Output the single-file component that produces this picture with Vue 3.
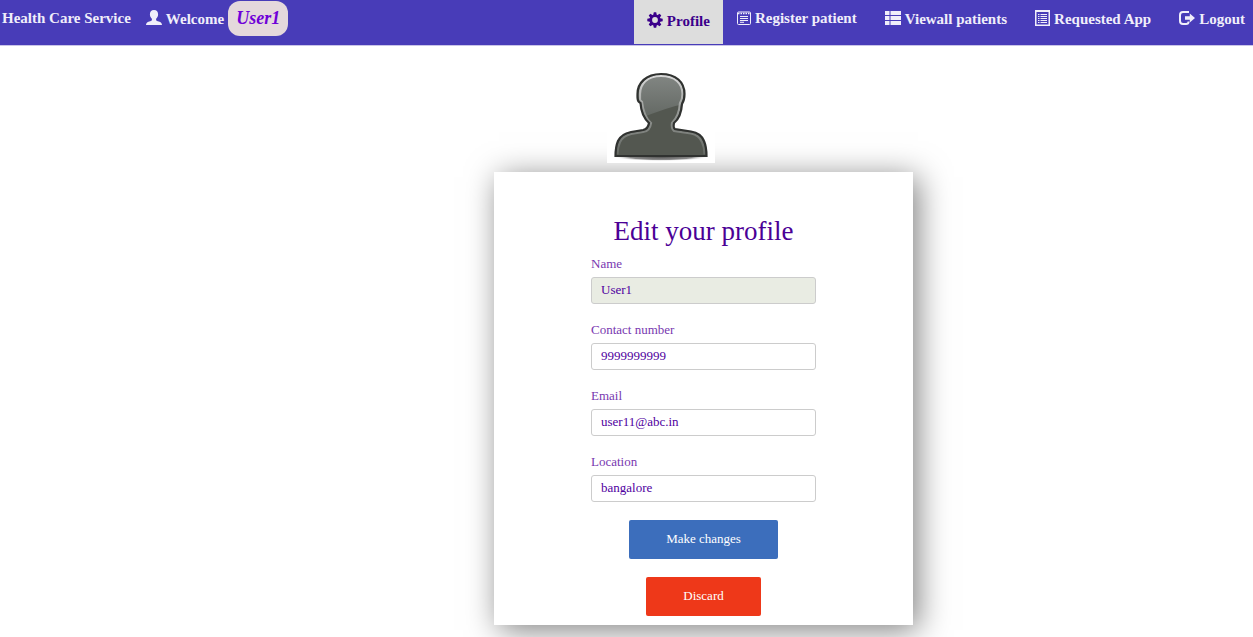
<script setup>
import { ref } from 'vue'

const name = ref('User1')
const contact = ref('9999999999')
const email = ref('user11@abc.in')
const location = ref('bangalore')
</script>

<template>
  <div class="page">
    <nav class="navbar">
      <div class="side">
        <a class="brand" href="#">Health Care Service</a>
        <a class="link" href="#">
          <svg class="icon person" viewBox="0 0 16 16" fill="currentColor" aria-hidden="true">
            <path d="M8 0C5.200 0 3.800 1.900 3.900 4.400C4 6.500 4.900 7.800 5.900 8.800V10.200C5.400 11.200 3.500 11.300 1.900 12C.7 12.600.1 13.500 0 15H16C15.900 13.500 15.300 12.600 14.100 12C12.500 11.300 10.600 11.200 10.100 10.200V8.800C11.100 7.800 12 6.500 12.100 4.400C12.200 1.900 10.800 0 8 0Z" />
          </svg>
          <span>Welcome</span>
          <em class="pill">User1</em>
        </a>
      </div>
      <div class="side menu">
        <a class="link active" href="#">
          <svg class="icon" viewBox="0 0 16 16" aria-hidden="true">
            <g fill="currentColor">
              <path d="M6.800 .3H9.200L10 4H6ZM6 12H10L9.200 15.700H6.800Z" />
              <path transform="rotate(45 8 8)" d="M6.800 .3H9.200L10 4H6ZM6 12H10L9.200 15.700H6.800Z" />
              <path transform="rotate(90 8 8)" d="M6.800 .3H9.200L10 4H6ZM6 12H10L9.200 15.700H6.800Z" />
              <path transform="rotate(135 8 8)" d="M6.800 .3H9.200L10 4H6ZM6 12H10L9.200 15.700H6.800Z" />
            </g>
            <circle cx="8" cy="8" r="4.200" fill="#ddd" stroke="currentColor" stroke-width="2.600" />
          </svg>
          <span>Profile</span>
        </a>
        <a class="link top" href="#">
          <svg class="icon small" viewBox="0 0 14 14" fill="none" stroke="currentColor" aria-hidden="true">
            <rect x=".5" y="1" width="13" height="12.500" rx="1" />
            <path d="M1 2.500H13" stroke-dasharray="1.500 1" stroke-width="1.600" />
            <path d="M3 5.500H11M3 7.500H11M3 9.500H11M3 11.300H7" />
          </svg>
          <span>Register patient</span>
        </a>
        <a class="link" href="#">
          <svg class="icon rows" viewBox="0 0 16 16" fill="currentColor" aria-hidden="true">
            <path d="M0 1H4.500V5H0ZM5.500 1H16V5H5.500ZM0 6H4.500V10H0ZM5.500 6H16V10H5.500ZM0 11H4.500V15H0ZM5.500 11H16V15H5.500Z" />
          </svg>
          <span>Viewall patients</span>
        </a>
        <a class="link" href="#">
          <svg class="icon list" viewBox="0 0 15 16" aria-hidden="true">
            <path fill="currentColor" fill-rule="evenodd" d="M0 0H15V16H0ZM1.500 2V14.500H13.500V2Z" />
            <path fill="none" stroke="currentColor" d="M3 4.500H4.500M5.500 4.500H12M3 6.500H4.500M5.500 6.500H12M3 8.500H4.500M5.500 8.500H12M3 10.500H4.500M5.500 10.500H12M3 12.500H4.500M5.500 12.500H12" />
          </svg>
          <span>Requested App</span>
        </a>
        <a class="link" href="#">
          <svg class="icon rows" viewBox="0 0 16 16" aria-hidden="true">
            <path fill="none" stroke="currentColor" stroke-width="2" d="M10 2H4Q1 2 1 5V11Q1 14 4 14H7Q9.500 14 9.500 12V11.500" />
            <path fill="currentColor" d="M6 6.200H10.800V3.500L16 8L10.800 12.500V9.800H6Z" />
          </svg>
          <span>Logout</span>
        </a>
      </div>
    </nav>

    <main class="content">
      <svg class="avatar" viewBox="0 0 108 96" role="img" aria-label="Profile picture">
        <defs>
          <radialGradient id="ground">
            <stop offset="0" stop-color="#555" />
            <stop offset=".65" stop-color="#888" />
            <stop offset="1" stop-color="#fff" stop-opacity="0" />
          </radialGradient>
          <linearGradient id="sheen" x1="0" y1="0" x2="0" y2="1">
            <stop offset="0" stop-color="#858986" />
            <stop offset="1" stop-color="#626762" />
          </linearGradient>
          <linearGradient id="rim" x1="0" y1="0" x2="0" y2="1">
            <stop offset="0" stop-color="#d8d8d8" />
            <stop offset=".45" stop-color="#969996" />
            <stop offset="1" stop-color="#666a65" />
          </linearGradient>
          <clipPath id="bust">
            <path d="M54 7C39 7 30.500 16 30.500 27C30.500 31 30 33 32 35L33.500 36C34 44 36.500 51 42 56Q41 62 36 63L24 65Q14 67 11 74Q8.500 80 8.500 89H99.500Q99.500 80 97 74Q94 66 84 64.500L68 62Q66 61 67 56C72 52 74.500 45 75 37C77 34 77.500 31 77.500 27C77.500 15 69 7 54 7Z" />
          </clipPath>
        </defs>
        <rect width="108" height="96" fill="#fff" />
        <ellipse cx="54" cy="90" rx="48" ry="4" fill="url(#ground)" />
        <g clip-path="url(#bust)">
          <rect width="108" height="96" fill="#535750" />
          <path d="M25 4H82V36Q60 40 32 52Z" fill="url(#sheen)" />
        </g>
        <path d="M54 9C40 9 33 17 33 27V33L35 35C36 44 38.500 51 44 56Q43 64 36 65L24 67Q16 69 13 75Q10.500 80 10.500 87.500M97.500 87.500Q97.500 80 95 75Q92 68 84 66.500L67 64Q64 61 65 56C70 51 72.500 45 73 36C75 33 75.500 31 75.500 27C75.500 16 68 9 54 9" fill="none" stroke="url(#rim)" stroke-width="2.200" />
        <path d="M54 7C39 7 30.500 16 30.500 27C30.500 31 30 33 32 35L33.500 36C34 44 36.500 51 42 56Q41 62 36 63L24 65Q14 67 11 74Q8.500 80 8.500 89H99.500Q99.500 80 97 74Q94 66 84 64.500L68 62Q66 61 67 56C72 52 74.500 45 75 37C77 34 77.500 31 77.500 27C77.500 15 69 7 54 7Z" fill="none" stroke="#303230" stroke-width="2.200" />
      </svg>

      <form class="card" @submit.prevent>
        <h1>Edit your profile</h1>
        <div class="field">
          <label for="name">Name</label>
          <input id="name" v-model="name" class="locked" type="text" readonly />
        </div>
        <div class="field">
          <label for="contact">Contact number</label>
          <input id="contact" v-model="contact" type="text" />
        </div>
        <div class="field">
          <label for="email">Email</label>
          <input id="email" v-model="email" type="text" />
        </div>
        <div class="field">
          <label for="location">Location</label>
          <input id="location" v-model="location" type="text" />
        </div>
        <div class="actions">
          <button class="save" type="submit">Make changes</button>
          <button class="discard" type="button">Discard</button>
        </div>
      </form>
    </main>
  </div>
</template>

<style>
body {
  margin: 0;
  background: #fff;
  overflow: hidden;
}
</style>

<style scoped>
.page {
  font-family: "Liberation Serif", "Times New Roman", serif;
  font-size: 13px;
}

.navbar {
  display: flex;
  justify-content: space-between;
  box-sizing: border-box;
  height: 46px;
  padding: 0 8px 0 2px;
  background: #483cb8;
  border-bottom: 1px solid #c9c4e8;
  font-size: 15px;
  font-weight: bold;
  line-height: 18px;
  white-space: nowrap;
}

.side {
  display: flex;
  align-items: flex-start;
  gap: 28px;
}

.side:first-child {
  gap: 15px;
}

.brand {
  padding-top: 9px;
  color: #f0eefa;
  text-decoration: none;
}

.link {
  display: flex;
  align-items: center;
  gap: 4px;
  height: 38px;
  color: #f0eefa;
  text-decoration: none;
}

.top {
  height: 36px;
}

.active {
  box-sizing: border-box;
  height: 44px;
  margin-right: -14px;
  padding: 0 13px 2px;
  background: #ddd;
  color: #3b008b;
}

.icon {
  width: 16px;
  height: 16px;
  flex: none;
}

.active .icon,
.person,
.rows,
.list {
  margin-bottom: 2px;
}

.small {
  width: 14px;
  height: 14px;
}

.list {
  width: 15px;
}

.pill {
  align-self: flex-start;
  margin-top: 1px;
  padding: 0 8px;
  border-radius: 12px;
  background: #e4d8dc;
  color: #6f00d8;
  font-size: 18px;
  line-height: 35px;
}

.content {
  display: flex;
  flex-direction: column;
  align-items: center;
  padding: 21px 0 12px 154px;
}

.avatar {
  position: relative;
  z-index: 1;
  width: 108px;
  height: 96px;
  margin-right: 85px;
}

.card {
  display: flex;
  flex-direction: column;
  align-items: center;
  box-sizing: border-box;
  width: 419px;
  max-width: 100%;
  margin-top: 9px;
  padding: 44px 97px 9px;
  background: #fff;
  box-shadow: 5px 5px 30px rgba(0, 0, 0, 0.5);
}

h1 {
  margin: 0 0 8px;
  color: #4b0096;
  font-size: 27px;
  font-weight: normal;
  line-height: 31px;
}

.field {
  display: flex;
  flex-direction: column;
  align-self: stretch;
  gap: 5px;
  margin-bottom: 17px;
}

label {
  color: #7838b0;
  line-height: 17px;
}

input {
  box-sizing: border-box;
  width: 100%;
  height: 27px;
  padding: 0 9px 1px;
  border: 1px solid #ccc;
  border-radius: 3px;
  background: #fff;
  color: #5000a0;
  font: inherit;
}

.locked {
  background: #e9ece3;
}

.actions {
  display: flex;
  flex-direction: column;
  align-items: center;
  gap: 18px;
  padding-top: 1px;
}

button {
  height: 39px;
  padding: 0 37px 2px;
  border: 0;
  border-radius: 2px;
  color: #fff;
  font: inherit;
}

.save {
  background: #3c6ebc;
}

.discard {
  background: #ee3819;
}
</style>
